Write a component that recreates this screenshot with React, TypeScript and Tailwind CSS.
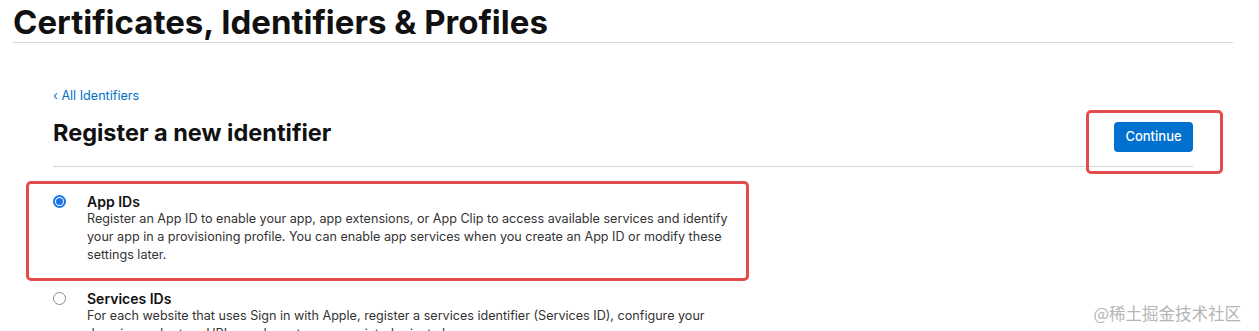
import React from 'react';

const font = { fontFamily: 'Inter, "Noto Sans", "Liberation Sans", sans-serif' };

function Radio({ checked }: { checked?: boolean }) {
  return checked ? (
    <span className="mt-[2px] flex h-[13px] w-[13px] shrink-0 items-center justify-center rounded-full border-[2px] border-[#1a73e8] bg-white">
      <span className="h-[7px] w-[7px] rounded-full bg-[#1a73e8]" />
    </span>
  ) : (
    <span className="mt-[2px] h-[13px] w-[13px] shrink-0 rounded-full border border-[#8a8a8a] bg-white" />
  );
}

const options = [
  {
    title: 'App IDs',
    checked: true,
    desc: 'Register an App ID to enable your app, app extensions, or App Clip to access available services and identify your app in a provisioning profile. You can enable app services when you create an App ID or modify these settings later.',
  },
  {
    title: 'Services IDs',
    checked: false,
    desc: 'For each website that uses Sign in with Apple, register a services identifier (Services ID), configure your domains and return URLs, and create an associated private key.',
  },
];

export default function App() {
  return (
    <div className="relative h-[331px] w-[1259px] overflow-hidden bg-white text-[#1d1d1f]" style={font}>
      <div className="ml-[13px] mr-[26px] border-b border-[#d6d6d6] pt-[3px] pb-[1px]">
        <h1 className="text-[33px] font-bold leading-[38px] tracking-[0px] text-[#111]">
          Certificates, Identifiers &amp; Profiles
        </h1>
      </div>

      <div className="ml-[53px] mr-[66px] pt-[45px]">
        <a className="block text-[12.6px] leading-[16px] text-[#0070c9]">‹ All Identifiers</a>
        <div className="flex items-start justify-between border-b border-[#d6d6d6] pt-[14px] pb-[14px]">
          <h2 className="text-[23.5px] font-bold leading-[30px] text-[#111]">Register a new identifier</h2>
          <div className="relative">
            <button className="mt-[4px] h-[30px] w-[79px] rounded-[4px] bg-[#0071ce] text-[13px] font-medium text-white">
              Continue
            </button>
            <div className="pointer-events-none absolute -top-[8px] -left-[28px] h-[64px] w-[137px] rounded-[5px] border-[3px] border-[#e34c4c]" />
          </div>
        </div>
      </div>

      <div className="ml-[26px] mt-[14px] flex flex-col">
        {options.map((o, i) => (
          <div
            key={i}
            className={
              i === 0
                ? 'w-[723px] rounded-[5px] border-[3px] border-[#e34c4c] pt-[9px] pb-[14px] pl-[24px] pr-[10px]'
                : 'w-[723px] pt-[9px] pl-[27px] pr-[13px]'
            }
          >
            <div className="flex gap-[21px]">
              <Radio checked={o.checked} />
              <div className="w-[650px]">
                <div className="text-[14px] font-semibold leading-[17px] text-[#111]">{o.title}</div>
                <p className="text-[12.6px] leading-[18px] text-[#333]">{o.desc}</p>
              </div>
            </div>
          </div>
        ))}
      </div>

      <div
        className="absolute right-[18px] bottom-[5px] text-[16.5px] text-[#b5b5b5]"
        style={{ fontFamily: '"Noto Sans CJK SC", "Noto Sans", sans-serif' }}
      >
        @稀土掘金技术社区
      </div>
    </div>
  );
}
